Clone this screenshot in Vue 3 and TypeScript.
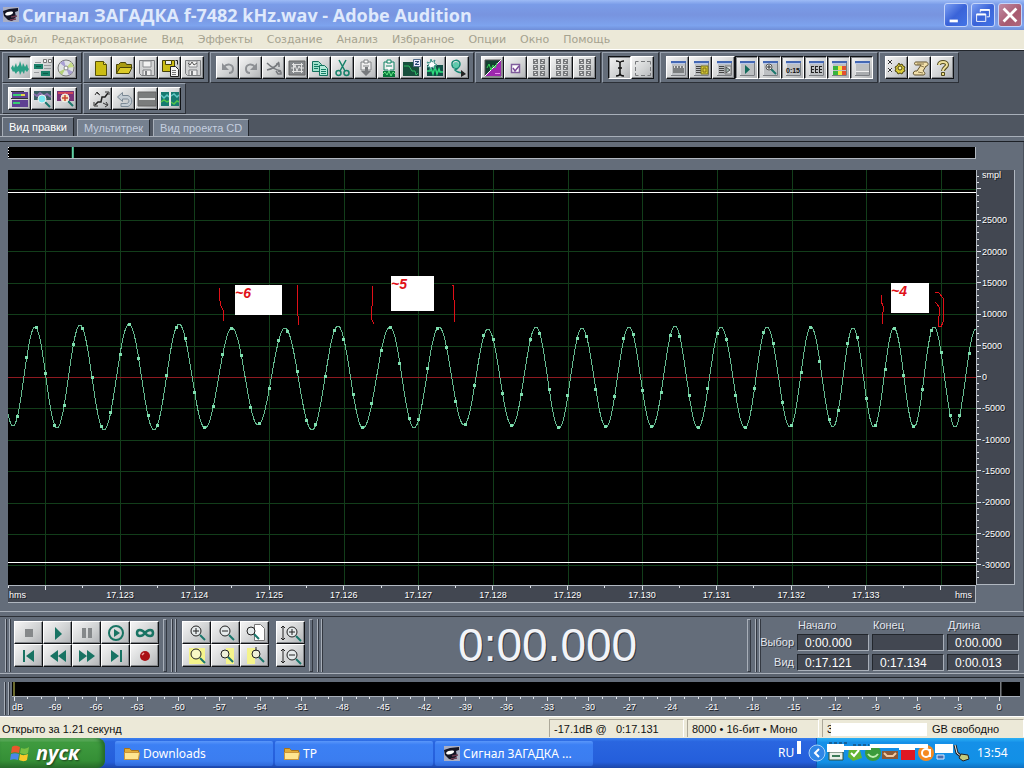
<script setup lang="ts">
type Shape = { d: string; f?: string; s?: string; w?: number }
type Tool = { id: string; title: string; pressed?: boolean }

const P = (d: string, f = 'none', s = 'none', w = 1): Shape => ({ d, f, s, w })

const windowBase: Shape[] = [P('M2 2h15v15H2z', '#dfe1e3'), P('M2 2h15v2H2z', '#4468b4'), P('M2 4h15v1H2z', '#b8c8e8'), P('M3 5h13v11H3z', '#bcbfc2'), P('M2 16.5h14.500V4', 'none', '#7a7d82')]
const diskette: Shape[] = [P('M1.500 1.500h15v15h-13l-2-2z', '#d2d3d4', '#7b7d80'), P('M5 2h8v6H5z', '#f2f2f2', '#8b8d90'), P('M5 16v-5h8v5', '#eee', '#7b7d80'), P('M7 12h2v4H7z', '#7b7d80')]
const cells: Shape[] = [0, 6, 12].flatMap(y => [P(`M3 ${y}h5v5H3zM10 ${y}h5v5h-5z`, '#77797c'), P(`M4 ${y + 1.5}h2M12 ${y + 1.5}h2M5 ${y + 3.5}h2M11 ${y + 3.5}h2`, 'none', '#ddd')])
const clipboard = (c: string): Shape[] => [P('M4 3h10v8H4z', '#eee', c), P('M7 1h4v3H7z', '#fff', c), P('M6 7h6', 'none', c)]
const lens = (x: number, y: number, r: number, fill: string, c = '#222'): Shape[] => [
  P(`M${x + r - 1} ${y + r - 1}l5 5`, 'none', '#19766c', 2),
  P(`M${x - r} ${y}a${r} ${r} 0 1 0 ${2 * r} 0a${r} ${r} 0 1 0 ${-2 * r} 0z`, fill, c)
]

const icons: Record<string, Shape[]> = {
  wave: [P('M0 9 2 6 3 9 5 4 6 8 8 6 9 2 11 8 12 4 14 8 16 5 17 9 18 10 16 13 14 11 13 15 11 12 9 16 8 12 6 13 5 15 3 12 2 13z', '#2b9f86')],
  multi: [P('M0 5h9v5H0zM7 12h9v5H7z', '#198069'), P('M2 7.500h5M9 14.500h5', 'none', '#0d5a48'), P('M9.500 .5h3v3h-3zM14.500 .5h3v3h-3z', '#f4f4f4', '#777'), P('M1 3.500h6M10 6.500h7M10 9.500h7M0 13.500h5', 'none', '#999b9e')],
  cd: [P('M1 9a8 8 0 1 0 16 0a8 8 0 1 0-16 0z', '#dfe2e4', '#777'), P('M9 9 3 4 7 1.500z', '#a89fd4'), P('M9 9 14 3 17 8z', '#c6dc84'), P('M9 9 2 13 5 16z', '#b4d07a'), P('M9 9 12 16.500 16 13z', '#a49cce'), P('M7 9a2 2 0 1 0 4 0a2 2 0 1 0-4 0z', '#fff', '#888')],
  new: [P('M3.500 2.500h8l3 3v11h-11z', '#cbbd14', '#55500a'), P('M11.500 2.500v3h3', '#eee27a', '#55500a')],
  open: [P('M1.500 14.500v-9h2l2-2h5l1 2h5v3', '#a99b10', '#4a4508'), P('M1.500 14.500 5 8.500h12l-3 6z', '#dccb28', '#4a4508')],
  save: diskette,
  saveas: [P('M1.500 1.500h12v11h-12z', '#cbbd14', '#45410a'), P('M4.500 1.500h6v4h-6z', '#eee', '#45410a'), P('M9.500 7.500h5l3 3v7h-8z', '#f5f5f5', '#222'), P('M11 11.500h4M11 13.500h4M11 15.500h4', 'none', '#777'), P('M14.500 1.500h2v4', 'none', '#222')],
  saveall: [...diskette, P('M4 4l2 2 2-3 2 3 3-2', 'none', '#555')],
  undo: [P('M3 4v7h7z', '#8d9094'), P('M5 8c3-4 9-3 9 2c0 2-1 4-4 4', 'none', '#8d9094', 2)],
  redo: [P('M15 4v7H8z', '#8d9094'), P('M13 8C10 4 4 5 4 10c0 2 1 4 4 4', 'none', '#8d9094', 2)],
  cutg: [P('M2 4c5 5 9 7 14 8M14 3C11 8 7 10 2 11M11 5h3v3M13 12l3 1v2h-3l-2-3', 'none', '#777a7e', 1.5)],
  grid: [P('M1 2h16v14H1z', '#85888b', '#666'), P('M4 5.500h11M4 12.500h11M5.500 4v10M13.500 4v10M3 9h3l1-3 2 6 2-5 1 2h4', 'none', '#e2e2e2')],
  copy: [P('M1.500 2.500h6l3 3v7h-9z', '#9fe1cb', '#13715d'), P('M8.500 6.500h5l3 3v7h-8z', '#b4eada', '#13715d'), P('M3 5.500h4M3 7.500h5M3 9.500h4M10 10.500h5M10 12.500h5M10 14.500h5', 'none', '#137d65')],
  cut: [P('M5 1l6 11M12 1 6 12', 'none', '#158069', 1.5), P('M2 14a2 2 0 1 0 5 0a2 2 0 1 0-5 0M10 14a2 2 0 1 0 5 0a2 2 0 1 0-5 0', 'none', '#158069', 1.5)],
  paste: [...clipboard('#808386'), P('M8 8h3v4h3l-5 5-5-5h4z', '#777a7d')],
  mix: [...clipboard('#118365'), P('M7 8h4l-2 4z', '#fff'), P('M3 12h12v6H3z', '#087a3c'), P('M3 15l2-2 2 3 2-4 2 5 2-4 2 2', 'none', '#64e084')],
  zero: [P('M0 3h16v14H0z', '#174f3d'), P('M1 7h5l3 5h3l1 4 2-2', 'none', '#2dbc62'), P('M10.500 .5h7v7h-7z', '#eef', '#4f6988'), P('M12 2.500h4l-4 3h4', 'none', '#294a76')],
  noise: [P('M1 6h16v11H1z', '#124e47'), P('M1 12h3l1-3 2 6 2-7 2 7 2-5 1 3h3', 'none', '#2dde7c', 1.5), P('M5 0l1 3 3-2-1 3 3 2-3 1 1 3-3-2-2 3V8L1 8l2-2-2-3 3 1z', '#fff', '#3f9389')],
  loop: [P('M10 7c-2 3-6 3-7-1c-1-6 8-6 8-1c0 2-2 5-5 6c3 3 6 3 9 3', 'none', '#168874', 1.5), P('M4 6a3 3 0 1 1 6 0a3 3 0 1 1-6 0z', '#5fc9ac'), P('M12 11l5 4-5 3z', '#222')],
  spec: [P('M1 1h16v16H1z', '#143f31', '#555'), P('M17 1v16H1z', '#9d27ae'), P('M1 17 17 1', 'none', '#fff'), P('M3 9l2-4 2 6 2-5 2 3 2-5', 'none', '#32d454'), P('M11 14.500h5', 'none', '#ef8cef')],
  check: [P('M4.500 5.500h8v8h-8z', '#fff', '#7f5d9c', 1.5), P('M6 9l2 3 4-5', 'none', '#7b4a98', 1.5)],
  cells,
  ibeam: [P('M5 2c2 0 4 1 4 2v10c0 2-2 3-4 3M13 2c-2 0-4 1-4 2v10c0 2 2 3 4 3M7 9h4', 'none', '#111', 1.5)],
  marquee: [P('M1.500 5.500v-3h3M7 2.500h4M13 2.500h3.500v3M16.500 8v4M16.500 14v2.500h-3M11 16.500H7M4.500 16.500h-3V14M1.500 12V8', 'none', '#77797c')],
  win1: [...windowBase, P('M4 7h11v7H4z', '#7b7e7f'), P('M5.500 7v2M8.500 7v2M11.500 7v2M14.500 7v2', 'none', '#ddd')],
  win2: [...windowBase, P('M4 7.500h5M4 9.500h5M4 11.500h5M4 13.500h5', 'none', '#444'), P('M9 7h7v8H9z', '#d7cb38', '#77701b'), P('M11 9h3v4h-3z', 'none', '#806f16')],
  win3: [...windowBase, P('M4 7.500h5M4 9.500h5M4 11.500h5M4 13.500h5', 'none', '#444'), P('M10 7h6v8h-6z', '#dce1e2', '#777'), P('M11 8v6l4-3z', '#9fb8b2', '#555')],
  win4: [...windowBase, P('M7 6v9l5-4.500z', '#126b5b')],
  win5: [...windowBase, ...lens(8, 8, 3, '#edf1ef', '#555'), P('M6 8h4M8 6v4', 'none', '#333')],
  win6: windowBase,
  win7: [...windowBase, P('M4 7.500h3M4 10.500h3M4 13.500h3M4.500 7v7M8 7.500h3M8 10.500h3M8 13.500h3M8.500 7v7M12 7.500h3M12 10.500h3M12 13.500h3M12.500 7v7', 'none', '#222')],
  win8: [...windowBase, P('M3 7h5v4H3zM3 12h5v4H3z', '#38b33e'), P('M8 7h4v4H8zM8 12h4v4H8z', '#f2e83e'), P('M12 7h4v4h-4zM12 12h4v4h-4z', '#e45130')],
  win9: [...windowBase, P('M3 12.500h13', 'none', '#eee'), P('M3 13h13v3H3z', '#a9acaf')],
  gear: [P('M0 1h4v4H0zM0 9h4v4H0z', '#eee'), P('M0 1l4 4M4 1 0 5M0 9l4 4M4 9l-4 4', 'none', '#333'), P('M11 4l1 2 2-1 1 2 2 1-1 2 1 2-2 1-1 2-2-1-2 1-1-2-2-1 1-2-1-2 2-1z', '#dacb3a', '#4c450e'), P('M10 9a2 2 0 1 0 4 0a2 2 0 1 0-4 0', '#f8f1b4', '#4c450e')],
  script: [P('M5 3c-2 0-2 3 0 3h5l-4 6c-4-1-5 4-2 4h8c3 0 2-3 0-4l3-5h1c2-1 1-4-1-4z', '#f1dfaa', '#60512d'), P('M6 5h7M10 7l3 1M7 13l5 1', 'none', '#8b794d')],
  help: [P('M5 6c0-4 8-4 8 0c0 2-4 3-4 6', 'none', '#51491d', 4), P('M5 6c0-4 8-4 8 0c0 2-4 3-4 6', 'none', '#eee09b', 2), P('M7.500 13.500h3v3h-3z', '#eadb80', '#51491d')],
  bars: [P('M1 2h16v6H1zM1 10h16v7H1z', '#5e4092'), P('M0 8.500h17M0 1.500h13', 'none', '#333'), P('M2 5h8M2 13h7', 'none', '#37cf72', 2), P('M10 5h4', 'none', '#e5d34a', 2)],
  lens1: [P('M0 1h17v9H0z', '#3b5f64'), P('M0 4l3 2 3-3 4 3 3-2 4 3', 'none', '#8a71ad', 2), ...lens(8, 9, 4, '#78e7ef', '#eee')],
  lens2: [P('M0 1h17v10H0z', '#7a3278'), P('M1 3h15', 'none', '#d0485a', 2), ...lens(8, 8, 4, '#f7e3b0', '#eee'), P('M5 8h6M8 5v6', 'none', '#c74838', 1.5)],
  envelope: [P('M3 15l3-3h3l1-5h3l3-4', 'none', '#222', 1.5), P('M5 3l3 2M11 13l4 2M13 2h4v3M2 12v4h4M3 5l2-3 2 2M13 17l3-2-2-3', 'none', '#333')],
  back: [P('M7.500 2.500 2.500 7l5 4.500V9h5c2 0 2 4.500-1 4.500H6v3h7c5-2 5-9 0-11H7.500z', '#c3ccd3', '#7b8995')],
  flat: [P('M0 2h18v14H0z', '#7a7c7c', '#666'), P('M1 9h16', 'none', '#fff', 1.5)],
  waves: [P('M0 2h8v14H0zM10 2h8v14h-8z', '#167a70'), P('M0 5l3 3 3-3 2 2M10 6l3-2 3 3 2-2', 'none', '#63c7c5', 1.5), P('M0 12l3-2 3 2 2-1M10 12l3 2 3-3 2 1', 'none', '#54c44a', 1.5), P('M9 2v14', 'none', '#fff')],
  stop: [P('M5 5h8v8H5z', '#85888a')],
  play: [P('M6 3v13l7-6z', '#187363')],
  pause: [P('M4 4h4v10H4zM10 4h4v10h-4z', '#85888a')],
  playend: [P('M2 9a7 7 0 1 0 14 0a7 7 0 1 0-14 0z', 'none', '#187363', 2), P('M7 5v8l6-4z', '#187363')],
  infinity: [P('M9 9C6 5 1 5 1 9s5 4 8 0s8-4 8 0s-5 4-8 0z', 'none', '#187363', 2.5)],
  first: [P('M3 3h2v12H3zM14 3v12L6 9z', '#187363')],
  rew: [P('M9 3v12L1 9zM17 3v12L9 9z', '#187363')],
  fwd: [P('M1 3v12l8-6zM9 3v12l8-6z', '#187363')],
  last: [P('M4 3v12l8-6zM13 3h2v12h-2z', '#187363')],
  rec: [P('M4 9a5 5 0 1 0 10 0a5 5 0 1 0-10 0z', '#a90f14'), P('M6 8l2-2', 'none', '#f0a09e', 1.5)],
  zin: [...lens(8, 7, 5, '#e5eaeb'), P('M5 7h6M8 4v6', 'none', '#222')],
  zout: [...lens(8, 7, 5, '#e5eaeb'), P('M5 7h6', 'none', '#222')],
  zpage: [P('M8.500 .5h6l4 4v12h-10z', '#fff', '#777'), ...lens(5, 7, 4, '#e5eaeb')],
  zsel: [P('M1 1h16v16H1z', '#f5f48b'), ...lens(8, 7, 5, '#f9f9c5')],
  zleft: [P('M9 1h8v16H9z', '#f5f48b'), ...lens(8, 7, 4, '#eef0d8')],
  zright: [P('M1 1h8v16H1z', '#f5f48b'), ...lens(10, 7, 4, '#eef0d8'), P('M10 0v4', 'none', '#222')],
  vin: [P('M1 2v14M-1 4l2-2 2 2M-1 14l2 2 2-2', 'none', '#222'), ...lens(10, 8, 5, '#e5eaeb'), P('M7 8h6M10 5v6', 'none', '#222')],
  vout: [P('M1 2v14M-1 4l2-2 2 2M-1 14l2 2 2-2', 'none', '#222'), ...lens(10, 8, 5, '#e5eaeb'), P('M7 8h6', 'none', '#222')],
  app: [P('M1 1h16v15H1z', '#a9aec4'), P('M1 5l6-2 9-1v3l-3 1 1 5-4 4-4-1-4-4z', '#151525'), P('M3 8c2-3 9-3 8-1s-7 4-8 1z', '#fff'), P('M9 11l6-1M8 14l6-1', 'none', '#6d3a50', 1.5)],
  folder: [P('M1.500 3.500h5l2 2h7v9h-14z', '#e2ac37', '#a8731c'), P('M1.500 7.500h15l-1 7h-14z', '#ffe591', '#c9953c')]
}

const t = (id: string, title: string, pressed = false): Tool => ({ id, title, pressed })
const rows: Tool[][][] = [
  [
    [t('wave', 'Правка', true), t('multi', 'Мультитрек'), t('cd', 'Проект CD')],
    [t('new', 'Новый'), t('open', 'Открыть'), t('save', 'Сохранить'), t('saveas', 'Сохранить как'), t('saveall', 'Сохранить всё')],
    [t('undo', 'Отменить'), t('redo', 'Повторить'), t('cutg', 'Обрезать'), t('grid', 'Выделить всё'), t('copy', 'Копировать'), t('cut', 'Вырезать'), t('paste', 'Вставить'), t('mix', 'Микс-вставка'), t('zero', 'Ноль'), t('noise', 'Шум'), t('loop', 'Петля')],
    [t('spec', 'Спектр'), t('check', 'Привязка'), t('cells', 'Группа 1'), t('cells', 'Группа 2'), t('cells', 'Группа 3')],
    [t('ibeam', 'Выделение', true), t('marquee', 'Рамка')],
    [t('win1', 'Панели'), t('win2', 'Органайзер'), t('win3', 'Список'), t('win4', 'Транспорт', true), t('win5', 'Масштаб', true), t('win6', 'Время', true), t('win7', 'Выбор', true), t('win8', 'Уровни', true), t('win9', 'Строка состояния', true)],
    [t('gear', 'Параметры'), t('script', 'Сценарии'), t('help', 'Справка')]
  ],
  [
    [t('bars', 'Частоты'), t('lens1', 'Анализ частот'), t('lens2', 'Анализ фазы')],
    [t('envelope', 'Огибающая'), t('back', 'Вернуть'), t('flat', 'Тишина'), t('waves', 'Каналы')]
  ]
]

const menus = ['Файл', 'Редактирование', 'Вид', 'Эффекты', 'Создание', 'Анализ', 'Избранное', 'Опции', 'Окно', 'Помощь']
const tabs = ['Вид правки', 'Мультитрек', 'Вид проекта CD']
const transport: Tool[] = [t('stop', 'Стоп'), t('play', 'Пуск'), t('pause', 'Пауза'), t('playend', 'Играть до конца'), t('infinity', 'По кругу'), t('first', 'В начало'), t('rew', 'Назад'), t('fwd', 'Вперёд'), t('last', 'В конец'), t('rec', 'Запись')]
const zooms: Tool[] = [t('zin', 'Увеличить'), t('zout', 'Уменьшить'), t('zpage', 'Целиком'), t('zsel', 'К выделению'), t('zleft', 'К левому краю'), t('zright', 'К правому краю')]
const vzooms: Tool[] = [t('vin', 'Увеличить по вертикали'), t('vout', 'Уменьшить по вертикали')]

/* Plot space: 968 x 415 units */
const W = 968
const H = 415
const pc = (v: number, total: number) => `${(v / total) * 100}%`
const gridX = Array.from({ length: 13 }, (_, i) => 37.5 + i * 74.65)
const gridY = Array.from({ length: 13 }, (_, i) => 19 + i * 31.4)
const zeroY = gridY[6]
const gridRows = gridY.filter(y => y !== zeroY)
const scaleLabels = gridY.map((y, i) => ({ y, text: String(30000 - i * 5000) })).filter((_, i) => i > 0)
const minorY = Array.from({ length: 65 }, (_, i) => 6.44 + i * 6.28)
const timeLabels = gridX.slice(1, 12).map((x, i) => ({ x, text: `17.${123 + i}` }))
const timeTicks = Array.from({ length: 26 }, (_, i) => 0.2 + i * 37.325)

const extrema: [number, number][] = [
  [-17, 157], [5, 256], [27, 157], [49, 258], [72, 155], [96, 260], [121, 154], [146, 260], [171, 154], [197, 258], [224, 158], [250, 255], [277, 158], [304, 260], [330, 156],
  [355, 258], [382, 157], [406, 258], [431, 157], [456, 255], [480, 159], [504, 256], [528, 157], [551, 258], [574, 158], [598, 257], [621, 157], [644, 257], [667, 156],
  [690, 258], [713, 157], [737, 258], [759, 157], [782, 257], [803, 157], [825, 257], [845, 158], [866, 257], [886, 158], [906, 257], [926, 157], [947, 257], [968, 159], [989, 257]
]
function waveY(x: number): number {
  for (let i = 1; i < extrema.length; i++) {
    const [x1, y1] = extrema[i]
    const [x0, y0] = extrema[i - 1]
    if (x <= x1) return y0 + ((y1 - y0) * (1 - Math.cos((Math.PI * (x - x0)) / (x1 - x0)))) / 2
  }
  return zeroY
}
const wavePath = 'M' + Array.from({ length: W + 1 }, (_, x) => `${x} ${waveY(x).toFixed(1)}`).join('L')
const dots = Array.from({ length: 103 }, (_, i) => 9.4 + i * 9.33).filter(x => x < W).map(x => ({ x, y: waveY(x) }))

const notes = [
  { x: 227, y: 115, w: 47, h: 30, text: '~6' },
  { x: 383, y: 106, w: 43, h: 35, text: '~5' },
  { x: 883, y: 113, w: 38, h: 30, text: '~4' }
]
const redMarks = [
  'M211 118v8l2 10 2 4v11', 'M289 115v20l1 11 1 9',
  'M364 116v20l-1 6v6l3 6', 'M444 115h1v10l1 5v22',
  'M873 125v6l2 5v6l-1 4v8', 'M927 122l4 1 4 5v24l-2 5-3-1 1-10v-9l-2-3-2-2'
]

/* Level meter scale: 1007 units wide */
const levels = Array.from({ length: 24 }, (_, i) => ({ x: 43 + i * 41, text: String(-69 + i * 3) }))
const levelTicks = Array.from({ length: 73 }, (_, i) => ({ x: 2 + i * 13.67, big: i % 3 === 0 }))

const times = [
  { label: 'Выбор', values: ['0:00.000', '', '0:00.000'] },
  { label: 'Вид', values: ['0:17.121', '0:17.134', '0:00.013'] }
]
const columns = ['Начало', 'Конец', 'Длина']
const tasks = [
  { text: 'Downloads', icon: 'folder' },
  { text: 'TP', icon: 'folder' },
  { text: 'Сигнал ЗАГАДКА ...', icon: 'app' }
]
</script>

<template>
  <div class="app">
    <header class="title">
      <svg class="ico" viewBox="0 0 18 18"><path v-for="(s, i) in icons.app" :key="i" :d="s.d" :fill="s.f" :stroke="s.s" :stroke-width="s.w" /></svg>
      <h1>Сигнал ЗАГАДКА f-7482 kHz.wav - Adobe Audition</h1>
      <button class="wb" aria-label="Свернуть"><svg viewBox="0 0 24 24"><path d="M5 17h9v3H5z" fill="#fff" /></svg></button>
      <button class="wb" aria-label="Восстановить"><svg viewBox="0 0 24 24" fill="none" stroke="#fff"><path d="M9 9V6h10v8h-3" /><path d="M9 6.5h10" stroke-width="2" /><path d="M5 11h10v8H5z" /><path d="M5 11.5h10" stroke-width="2" /></svg></button>
      <button class="wb close" aria-label="Закрыть"><svg viewBox="0 0 24 24"><path d="M5 5l14 14M19 5 5 19" stroke="#fff" stroke-width="3" /></svg></button>
    </header>

    <nav class="menu"><button v-for="m in menus" :key="m">{{ m }}</button></nav>

    <div class="toolbars">
      <div v-for="(row, r) in rows" :key="r" class="trow">
        <div v-for="(g, k) in row" :key="k" class="tgroup">
          <button v-for="(b, j) in g" :key="j" class="tb" :class="{ pressed: b.pressed }" :aria-label="b.title">
            <svg class="ico" viewBox="0 0 18 18">
              <path v-for="(s, i) in icons[b.id]" :key="i" :d="s.d" :fill="s.f" :stroke="s.s" :stroke-width="s.w" />
              <text v-if="b.id === 'win6'" x="9" y="14" text-anchor="middle" class="clock">0:15</text>
            </svg>
          </button>
        </div>
      </div>
    </div>

    <div class="tabs" role="tablist">
      <button v-for="(tab, i) in tabs" :key="tab" role="tab" :aria-selected="i === 0" :class="{ active: i === 0 }">{{ tab }}</button>
    </div>

    <main class="editor">
      <div class="overview"><svg><line x1="6.7%" x2="6.7%" y1="0" y2="100%" stroke="#5fd0a4" stroke-width="2" /><line x1="0" x2="0" y1="0" y2="100%" stroke="#fff" stroke-width="2" stroke-dasharray="1 2" /></svg></div>
      <div class="plotgrid">
        <div class="plot">
          <svg :viewBox="`0 0 ${W} ${H}`" preserveAspectRatio="none">
            <g stroke="#123d1a" class="thin">
              <line v-for="x in gridX" :key="x" :x1="x" :x2="x" y1="0" :y2="H" />
              <line v-for="y in gridRows" :key="y" :y1="y" :y2="y" x1="0" :x2="W" />
            </g>
            <rect x="0" y="207" :width="W" height="1" fill="#8e1a20" />
            <g stroke="#fff" class="thin"><line x1="0" :x2="W" y1="22.5" y2="22.5" /><line x1="0" :x2="W" y1="392.5" y2="392.5" /></g>
            <path :d="wavePath" fill="none" stroke="#64b98f" class="thin" />
            <rect v-for="d in dots" :key="d.x" :x="Math.floor(d.x) - 1" :y="Math.floor(d.y) - 1" width="3" height="3" fill="#7fe0b0" />
            <path v-for="m in redMarks" :key="m" :d="m" fill="none" stroke="#e01018" class="thin" />
          </svg>
          <div v-for="n in notes" :key="n.text" class="note" :style="{ left: pc(n.x, W), top: pc(n.y, H), width: pc(n.w, W), height: pc(n.h, H) }">{{ n.text }}</div>
        </div>
        <svg class="scale">
          <line v-for="y in minorY" :key="y" x1="0" x2="2" :y1="pc(y, H)" :y2="pc(y, H)" />
          <line v-for="y in gridY" :key="'g' + y" x1="0" x2="4" :y1="pc(y, H)" :y2="pc(y, H)" />
          <g transform="translate(0 3)">
            <text x="5" :y="pc(5, H)">smpl</text>
            <text v-for="l in scaleLabels" :key="l.text" x="5" :y="pc(l.y, H)">{{ l.text }}</text>
          </g>
        </svg>
        <svg class="ruler">
          <line v-for="(x, i) in timeTicks" :key="x" :x1="pc(x, W)" :x2="pc(x, W)" y1="0" :y2="i % 2 ? 4 : 2" />
          <text x="1" y="12">hms</text>
          <text v-for="l in timeLabels" :key="l.text" :x="pc(l.x, W)" y="12" text-anchor="middle">{{ l.text }}</text>
          <text :x="pc(965, W)" y="12" text-anchor="end">hms</text>
        </svg>
      </div>
    </main>

    <section class="dock">
      <i class="grip" />
      <div class="pad five">
        <button v-for="b in transport" :key="b.id" class="tb big" :aria-label="b.title"><svg class="ico" viewBox="0 0 18 18"><path v-for="(s, i) in icons[b.id]" :key="i" :d="s.d" :fill="s.f" :stroke="s.s" :stroke-width="s.w" /></svg></button>
      </div>
      <i class="edge" /><i class="grip" />
      <div class="pad three">
        <button v-for="b in zooms" :key="b.id" class="tb big" :aria-label="b.title"><svg class="ico" viewBox="0 0 18 18"><path v-for="(s, i) in icons[b.id]" :key="i" :d="s.d" :fill="s.f" :stroke="s.s" :stroke-width="s.w" /></svg></button>
      </div>
      <div class="pad one">
        <button v-for="b in vzooms" :key="b.id" class="tb big" :aria-label="b.title"><svg class="ico" viewBox="0 0 18 18"><path v-for="(s, i) in icons[b.id]" :key="i" :d="s.d" :fill="s.f" :stroke="s.s" :stroke-width="s.w" /></svg></button>
      </div>
      <i class="edge" /><i class="grip" />
      <output class="time">0:00.000</output>
      <i class="edge" /><i class="grip" />
      <table class="fields">
        <thead><tr><td></td><th v-for="c in columns" :key="c" scope="col">{{ c }}</th></tr></thead>
        <tbody>
          <tr v-for="row in times" :key="row.label">
            <th scope="row"><span>{{ row.label }}</span></th>
            <td v-for="(v, i) in row.values" :key="i"><input type="text" :value="v" :aria-label="`${row.label}: ${columns[i]}`" /></td>
          </tr>
        </tbody>
      </table>
    </section>

    <section class="levels">
      <i class="grip" />
      <div class="meter">
        <div class="bar"><svg><line x1="2" x2="2" y1="0" y2="100%" stroke="#d8d860" /><line x1="98.1%" x2="98.1%" y1="0" y2="100%" stroke="#b8bcc2" /></svg></div>
        <svg class="db">
          <line v-for="k in levelTicks" :key="k.x" :x1="pc(k.x, 1007)" :x2="pc(k.x, 1007)" y1="0" :y2="k.big ? 4 : 2" />
          <text x="0" y="13">dB</text>
          <text v-for="l in levels" :key="l.text" :x="pc(l.x, 1007)" y="13" text-anchor="middle">{{ l.text }}</text>
        </svg>
      </div>
    </section>

    <footer class="status">
      <span class="msg">Открыто за 1.21 секунд</span>
      <span class="cell c1">-17.1dB @&nbsp;&nbsp; 0:17.131</span>
      <span class="cell c2">8000 • 16-бит • Моно</span>
      <span class="cell c3"><b>3</b><i class="blank" />GB свободно</span>
    </footer>

    <div class="taskbar">
      <button class="start">
        <svg viewBox="0 0 20 20"><path d="M2 4c3-2 5-1 8 0L9 10c-3-1-5-1-8 0z" fill="#e8582c" /><path d="M11 5c3 1 5 1 8-1l-1 6c-3 2-5 1-8 0z" fill="#78c043" /><path d="M1 11c3-1 5-1 8 0l-1 6c-3-1-5-1-8 0z" fill="#4a86e8" /><path d="M10 11c3 2 5 1 8 0l-1 6c-3 2-5 1-8 0z" fill="#f8c828" /></svg>
        <span>пуск</span>
      </button>
      <div class="tasks">
        <button v-for="k in tasks" :key="k.text"><svg class="ico" viewBox="0 0 18 18"><path v-for="(s, i) in icons[k.icon]" :key="i" :d="s.d" :fill="s.f" :stroke="s.s" :stroke-width="s.w" /></svg><span>{{ k.text }}</span></button>
      </div>
      <div class="lang">RU<i /></div>
      <div class="tray">
        <button class="chev" aria-label="Показать значки"><svg viewBox="0 0 18 18"><circle cx="9" cy="9" r="8" fill="#2f86e6" stroke="#a5d0f8" /><path d="M11 5 7 9l4 4" fill="none" stroke="#fff" stroke-width="2" /></svg></button>
        <svg class="icons" viewBox="0 0 144 24">
          <path d="M2 11h14v8H2z" fill="#e8efe8" stroke="#30503c" /><path d="M5 15h8" stroke="#3b7a58" stroke-width="2" />
          <path d="M22 7l10-2 3 12-9 3-5-4z" fill="#64b432" /><path d="M24 12l3 3 5-6" fill="none" stroke="#fff" stroke-width="2" />
          <circle cx="46" cy="12" r="8" fill="#3a9b3b" /><path d="M41 13c3 4 7 4 10 0" fill="none" stroke="#bff0b0" stroke-width="2" />
          <path d="M55 10h16v8H55z" fill="#8b5a38" /><path d="M57 12l3 3h6l3-3" fill="none" stroke="#f2c9a0" stroke-width="2" />
          <path d="M74 9h14v10H74z" fill="#e01822" />
          <circle cx="99" cy="12" r="8" fill="#f58a20" /><circle cx="99" cy="12" r="4" fill="none" stroke="#fff" stroke-width="2" /><path d="M103 8v8" stroke="#fff" stroke-width="2" />
          <path d="M110 14h7v4h-7z" fill="#4a70b0" stroke="#dde8ff" />
          <path d="M128 4l2 8 5 4" fill="none" stroke="#222" stroke-width="3" /><path d="M128 4l2 8 5 4" fill="none" stroke="#eee" /><path d="M134 13l7 1 1 4-6 2-4-3z" fill="#c4ca7c" stroke="#222" />
          <path d="M0 3h17v8H0zM17 5h27v4H17zM43 3h58v4H43zM72 6h16v3H72zM108 3h18v9h-18z" fill="#fff" />
          <path d="M2 2h20M26 4h16" stroke="#16304c" stroke-dasharray="3 2" />
        </svg>
        <time>13:54</time>
      </div>
    </div>
  </div>
</template>

<style>
body { margin: 0; }
</style>

<style scoped>
* { box-sizing: border-box; }
.app { display: flex; flex-direction: column; min-height: 100vh; background: #646d7a; font-family: 'Liberation Sans', Arial, sans-serif; color: #fff; overflow: hidden; }
button { font: inherit; color: inherit; border: 0; padding: 0; margin: 0; background: none; }
svg { display: block; }
.ico { width: 18px; height: 18px; flex: none; overflow: visible; }

.title { display: flex; align-items: center; height: 30px; padding: 0 2px; gap: 2px; background: linear-gradient(#9dbbf6, #7a9ce8 15%, #7894df 50%, #7da3ee 85%, #6f8ed8); }
.title h1 { flex: 1; margin: 0; font: bold 18px/28px 'Open Sans', 'Noto Sans', sans-serif; color: #dfe9fc; white-space: nowrap; overflow: hidden; }
.wb { width: 24px; height: 24px; border: 1px solid #c5d5fa; border-radius: 3px; background: linear-gradient(135deg, #7c9ff2, #3a63d8 50%, #4374e6); margin-left: 1px; }
.wb svg { width: 22px; height: 22px; }
.wb.close { background: linear-gradient(135deg, #c08ba4, #a85a70 60%, #b0677c); }

.menu { display: flex; height: 20px; padding: 0 7px; gap: 14px; background: #ece9d8; border-bottom: 1px solid #fff; color: #a5a28f; font: 11px/19px 'DejaVu Sans', sans-serif; white-space: nowrap; }

.toolbars { height: 64px; padding: 1px 2px 0; background: #4f5661; border-top: 1px solid #22262c; }
.trow { display: flex; gap: 1px; height: 31px; }
.tgroup { display: flex; align-items: center; height: 31px; padding: 0 4px 0 5px; background: #646d7a; border: 1px solid; border-color: #98a1ae #2c3037 #2c3037 #98a1ae; }
.tb { display: flex; align-items: center; justify-content: center; width: 23px; height: 23px; background: linear-gradient(135deg, #f4f4f4, #cfd1d2 60%, #b1b3b6); border: 1px solid; border-color: #fff #101215 #101215 #fff; box-shadow: inset -1px -1px #85888c; }
.tb.pressed { border-color: #101215 #fff #fff #101215; box-shadow: inset 1px 1px #85888c; }
.clock { font: bold 7px 'Liberation Sans', sans-serif; fill: #111; }

.tabs { display: flex; align-items: flex-end; gap: 3px; height: 28px; padding: 0 3px 5px; border-top: 1px solid #a8afb9; border-bottom: 1px solid #1c2026; background: linear-gradient(#4f5661 0 21px, #a8afb9 21px 22px, #646d7a 22px); font: 11px/16px 'Liberation Sans', sans-serif; }
.tabs button { height: 17px; padding: 0 6px; color: #c4cedf; background: #75808f; border: solid; border-width: 1px 1px 0; border-color: #a8afb9 #22262c #22262c #a8afb9; }
.tabs .active { height: 19px; margin-left: -1px; color: #fff; background: #646d7a; }

.editor { flex: 1; display: flex; flex-direction: column; padding: 5px 8px 8px; border-right: 1px solid #4a515c; border-bottom: 1px solid #a8afb9; }
.overview { height: 12px; margin: 0 39px 11px 0; background: #000; border: solid #b0b7c0; border-width: 0 1px 1px 0; }
.overview svg { width: 100%; height: 11px; }
.plotgrid { flex: 1; display: grid; grid-template: minmax(415px, 1fr) 18px / 1fr 39px; }
.plot { position: relative; background: #000; }
.plot > svg { position: absolute; inset: 0; width: 100%; height: 100%; }
.thin { vector-effect: non-scaling-stroke; shape-rendering: crispEdges; }
.note { position: absolute; background: #fff; color: #e01018; font: italic bold 14px/17px 'Liberation Sans', sans-serif; }
.scale, .ruler, .db { font: 9px 'Liberation Sans', sans-serif; fill: #fff; stroke: none; text-shadow: 1px 1px #1c2026; }
.scale line, .ruler line, .db line { stroke: #dfe3e8; shape-rendering: crispEdges; }
.scale { width: 100%; height: 100%; background: #424751; border: solid #b0b7c0; border-width: 0 1px 1px; }
.ruler { width: 100%; height: 18px; background: #424751; border: solid #b0b7c0; border-width: 1px 1px 1px 0; overflow: hidden; }

.dock { display: flex; height: 62px; padding: 3px 5px 1px; border-top: 4px solid #646d7a; border-bottom: 1px solid #a8afb9; box-shadow: inset 0 1px #2c3037; }
.grip { width: 5px; flex: none; border: solid #a8afb9; border-width: 0 1px; box-shadow: inset 1px 0 #333841, 1px 0 #333841; }
.edge { width: 4px; flex: none; margin-right: 4px; border: 1px solid; border-color: #a8afb9 #333841 #333841 #a8afb9; }
.pad { display: grid; align-content: start; padding-top: 2px; margin-left: 6px; }
.five { grid-template-columns: repeat(5, 29px); margin: 0 4px; }
.three { grid-template-columns: repeat(3, 29px); }
.one { grid-template-columns: 29px; margin: 0 4px 0 7px; }
.tb.big { width: 29px; height: 23px; }
.time { flex: 1; padding-left: 26px; text-align: center; font-size: 46px; line-height: 52px; color: #f2f4f8; text-shadow: 1px 1px #30353d; }
.fields { border-collapse: collapse; flex: none; font: 11px/13px 'Liberation Sans', sans-serif; color: #e3e7ee; text-shadow: 1px 1px #333841; }
.fields td, .fields th { padding: 0 0 3px 3px; font-weight: normal; text-align: left; }
.fields thead th, .fields thead td { padding: 0 0 2px 4px; }
.fields tbody th { padding-left: 0; }
.fields th span { display: flex; justify-content: flex-end; min-width: 33px; }
.fields input { display: block; width: 72px; height: 17px; padding: 0 7px; color: #fff; background: #424751; border: 1px solid; border-color: #22262c #a8afb9 #a8afb9 #22262c; border-radius: 0; font: 12px/15px 'Liberation Sans', sans-serif; }

.levels { display: flex; gap: 3px; height: 43px; padding: 5px 4px 1px; border-top: 3px solid #5a626e; box-shadow: inset 0 1px #22262c; border-bottom: 1px solid #fff; }
.meter { flex: 1; }
.bar { height: 15px; background: #000; border-bottom: 1px solid #a8afb9; }
.bar svg { width: 100%; height: 14px; }
.db { width: 100%; height: 19px; overflow: visible; }

.status { display: flex; height: 21px; gap: 3px; padding: 2px 0 1px 2px; color: #111; background: #ece9d8; font: 11px/20px 'Liberation Sans', sans-serif; white-space: nowrap; }
.msg { flex: 1; }
.cell { padding-left: 4px; border: solid; border-width: 1px 1px 0; border-color: #aca899 #fff #fff #aca899; line-height: 18px; }
.c1 { width: 135px; }
.c2 { width: 132px; }
.c3 { display: flex; width: 202px; gap: 1px; }
.c3 b { width: 3px; font-weight: normal; }
.blank { width: 96px; height: 13px; margin: 3px 4px 0 0; background: #fff; }

.taskbar { display: flex; height: 30px; background: linear-gradient(#3a80f0, #2a66e0 12%, #245edb 80%, #1b45a8); font: 12px/16px 'Noto Sans', sans-serif; }
.start { display: flex; align-items: center; gap: 6px; width: 105px; padding: 0 10px; border-radius: 0 8px 8px 0; background: linear-gradient(#7cc47a, #3f9b3f 15%, #358f36 75%, #2a6f2b); box-shadow: inset -3px 0 4px #24692a; font: italic bold 20px/26px 'Open Sans', sans-serif; text-shadow: 1px 1px 2px #1d3f1d; }
.start svg { width: 20px; height: 20px; }
.tasks { display: flex; flex: 1; gap: 2px; padding: 3px 0 2px 10px; }
.tasks button { display: flex; align-items: center; gap: 2px; width: 158px; padding: 0 8px; background: linear-gradient(#5a97fa, #3c80f4 15%, #3b7df0 80%, #2f68d8); border-radius: 2px; white-space: nowrap; }
.lang { display: flex; align-items: center; width: 38px; font-size: 12px; }
.lang i { align-self: flex-start; width: 4px; height: 13px; margin: 3px 0 0 3px; background: #fff; }
.tray { display: flex; align-items: center; width: 208px; background: linear-gradient(#2ab0f5, #1590e8 15%, #1290e6 80%, #0f70c0); border-left: 1px solid #0d54b4; }
.chev { margin-left: -9px; }
.chev svg { width: 18px; height: 18px; }
.icons { width: 144px; height: 24px; flex: none; margin-left: 1px; }
.tray time { margin-left: 6px; }
</style>
